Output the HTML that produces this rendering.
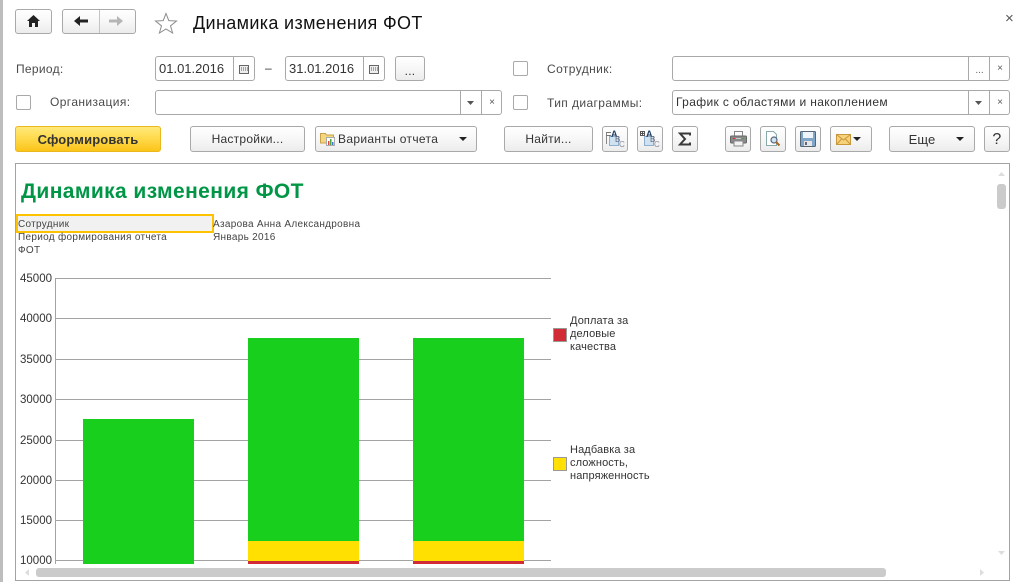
<!DOCTYPE html>
<html lang="ru"><head><meta charset="utf-8"><title>Динамика изменения ФОТ</title>
<style>
html,body{margin:0;padding:0;background:#fff}
#p{position:relative;width:1016px;height:582px;overflow:hidden;background:#fff;font-family:"Liberation Sans",Arial,sans-serif;font-size:12px;color:#333}
#p div,#p span.a,#p svg{position:absolute;box-sizing:border-box}
.b{border:1px solid #a9a9a9;border-radius:3px;background:linear-gradient(#fff,#f7f7f7 50%,#ececec);text-align:center;height:26px;top:126px;line-height:25px;color:#333;letter-spacing:.25px}
.f{border:1px solid #a9a9a9;border-radius:3px;background:#fff;height:25px;line-height:23px}
.s{top:0;bottom:0;width:1px;background:#a9a9a9}
.l{line-height:14px;white-space:nowrap;color:#4a4a4a;letter-spacing:.4px}
.c{width:15px;height:15px;border:1px solid #a9a9a9;border-radius:2px;background:#fff}
.g{left:55px;width:496px;height:1px;background:#a3a3a3}
.y{left:16px;width:36px;text-align:right;font-size:11.5px;line-height:14px;color:#333}
.t{font-size:10px;line-height:12px;white-space:nowrap;color:#444;letter-spacing:.3px}
.lg{left:570px;font-size:11px;line-height:13px;color:#333;white-space:nowrap;letter-spacing:.12px}
.x{font-size:10px;color:#555;text-align:center}
.ic{font-family:"Liberation Sans",Arial,sans-serif;font-weight:bold}
</style></head><body><div id="p">
<div style="left:0;top:0;width:3px;height:582px;background:#bdbdbd"></div>

<div class="b" style="left:15px;top:9px;width:37px;height:25px;border-radius:3px"></div>
<svg style="left:26px;top:14px" width="15" height="14" viewBox="0 0 15 14"><path d="M7.5 1 L1 7 L3 7 L3 13 L6 13 L6 9 L9 9 L9 13 L12 13 L12 7 L14 7 Z" fill="#222"/></svg>
<div class="b" style="left:62px;top:9px;width:74px;height:25px"></div>
<div style="left:99px;top:10px;width:1px;height:23px;background:#c4c4c4"></div>
<svg style="left:73px;top:15px" width="16" height="12" viewBox="0 0 16 12"><path d="M1 6 L7 1 L7 4.5 L15 4.5 L15 7.5 L7 7.5 L7 11 Z" fill="#222"/></svg>
<svg style="left:108px;top:15px" width="16" height="12" viewBox="0 0 16 12"><path d="M15 6 L9 1 L9 4.5 L1 4.5 L1 7.5 L9 7.5 L9 11 Z" fill="#b5b5b5"/></svg>
<svg style="left:154px;top:12px" width="24" height="22" viewBox="0 0 24 22"><path d="M12 1.5 L14.8 8.6 L22.5 9 L16.5 13.8 L18.6 21 L12 17 L5.4 21 L7.5 13.8 L1.5 9 L9.2 8.6 Z" fill="#fff" stroke="#8c8c8c" stroke-width="1"/></svg>
<div style="left:193px;top:12px;font-size:18px;line-height:22px;color:#111;white-space:nowrap;letter-spacing:.35px">Динамика изменения ФОТ</div>
<div style="left:1005px;top:12px;font-size:15px;line-height:14px;color:#555">×</div>

<div class="l" style="left:16px;top:62px;letter-spacing:.3px">Период:</div>
<div class="f" style="left:155px;top:56px;width:100px"><span class="a" style="left:3px;top:0;font-size:13px">01.01.2016</span><div class="s" style="left:77px"></div></div>
<svg style="left:239px;top:65px" width="10" height="9" viewBox="0 0 10 9"><rect x=".5" y=".5" width="9" height="8" fill="#eee" stroke="#666"/><path d="M2 3h1M4 3h1M6 3h1M8 3h1M2 5h1M4 5h1M6 5h1M8 5h1" stroke="#555"/></svg>
<div style="left:265px;top:61px;line-height:14px;color:#333">–</div>
<div class="f" style="left:285px;top:56px;width:100px"><span class="a" style="left:3px;top:0;font-size:13px">31.01.2016</span><div class="s" style="left:77px"></div></div>
<svg style="left:369px;top:65px" width="10" height="9" viewBox="0 0 10 9"><rect x=".5" y=".5" width="9" height="8" fill="#eee" stroke="#666"/><path d="M2 3h1M4 3h1M6 3h1M8 3h1M2 5h1M4 5h1M6 5h1M8 5h1" stroke="#555"/></svg>
<div class="b" style="left:395px;top:56px;width:30px;height:25px;line-height:28px">...</div>

<div class="c" style="left:16px;top:95px"></div>
<div class="l" style="left:50px;top:95px">Организация:</div>
<div class="f" style="left:155px;top:90px;width:347px"><div class="s" style="left:304px"></div><div class="s" style="left:325px"></div></div>
<svg style="left:467px;top:101px" width="7" height="4"><path d="M0 0H7L3.5 4Z" fill="#555"/></svg>
<div class="x" style="left:482px;top:96px;width:20px;line-height:14px">×</div>

<div class="c" style="left:513px;top:61px"></div>
<div class="l" style="left:547px;top:62px">Сотрудник:</div>
<div class="f" style="left:672px;top:56px;width:338px"><div class="s" style="left:295px"></div><div class="s" style="left:316px"></div></div>
<div style="left:969px;top:62px;width:21px;text-align:center;line-height:18px;font-size:10px;color:#666">...</div>
<div class="x" style="left:990px;top:62px;width:20px;line-height:14px">×</div>

<div class="c" style="left:513px;top:95px"></div>
<div class="l" style="left:547px;top:96px">Тип диаграммы:</div>
<div class="f" style="left:672px;top:90px;width:338px"><span class="a" style="left:3px;top:0;color:#333;white-space:nowrap;letter-spacing:.36px">График с областями и накоплением</span><div class="s" style="left:295px"></div><div class="s" style="left:316px"></div></div>
<svg style="left:975px;top:101px" width="7" height="4"><path d="M0 0H7L3.5 4Z" fill="#555"/></svg>
<div class="x" style="left:990px;top:96px;width:20px;line-height:14px">×</div>

<div class="b" style="left:15px;width:146px;border-color:#e8b81e;background:linear-gradient(#ffe97a,#ffd94a 50%,#fcc419);font-weight:bold;font-size:13px;color:#333;letter-spacing:.15px">Сформировать</div>
<div class="b" style="left:190px;width:115px">Настройки...</div>
<div class="b" style="left:315px;width:162px"></div>
<svg style="left:320px;top:131px" width="17" height="16" viewBox="0 0 17 16"><path d="M.5 2.5h5l1 1.5h7v8h-13z" fill="#f2d680" stroke="#c9a24a"/><rect x="6.5" y="6.5" width="8" height="8" fill="#fff" stroke="#aaa"/><rect x="8" y="10" width="1.5" height="4" fill="#d44"/><rect x="10" y="8" width="1.5" height="6" fill="#4a4"/><rect x="12" y="11" width="1.5" height="3" fill="#47c"/></svg>
<div style="left:338px;top:126px;line-height:26px;color:#333;white-space:nowrap;letter-spacing:.33px">Варианты отчета</div>
<svg style="left:459px;top:137px" width="8" height="4"><path d="M0 0H8L4 4Z" fill="#222"/></svg>
<div class="b" style="left:504px;width:89px">Найти...</div>

<div class="b" style="left:602px;width:26px"></div>
<svg style="left:604px;top:128px" width="22" height="22" viewBox="0 0 22 22"><path d="M5.5 8.5h9v9h-9z" fill="#cfe2f2" stroke="#8fb0cc"/><path d="M2.5 5v11" stroke="#888"/><path d="M2 4.500h5M2 7.500h5" stroke="#777"/><text class="ic" x="7" y="9" font-size="9" fill="#1d3f66">A</text><text x="11" y="14" font-size="8" fill="#667">B</text><text x="15" y="19" font-size="8" fill="#889">C</text></svg>
<div class="b" style="left:637px;width:26px"></div>
<svg style="left:639px;top:128px" width="22" height="22" viewBox="0 0 22 22"><path d="M5.500 8.500h9v9h-9z" fill="#cfe2f2" stroke="#8fb0cc"/><path d="M1.500 3.500h4v4h-4zM3.500 3.500v4M1.500 5.500h4" fill="none" stroke="#555"/><text class="ic" x="7" y="9" font-size="9" fill="#1d3f66">A</text><text x="11" y="14" font-size="8" fill="#667">B</text><text x="15" y="19" font-size="8" fill="#889">C</text></svg>
<div class="b" style="left:672px;width:26px"></div>
<svg style="left:678px;top:132px" width="14" height="14" viewBox="0 0 14 14"><path d="M12 3.500V1.500H2L7 7 2 12.500H12V10.500" fill="none" stroke="#3a3a3a" stroke-width="2"/></svg>

<div class="b" style="left:725px;width:26px"></div>
<svg style="left:730px;top:131px" width="17" height="16" viewBox="0 0 17 16"><rect x="4.500" y=".5" width="8" height="5" fill="#fff" stroke="#888"/><rect x=".5" y="5" width="16" height="7" rx="1" fill="#8a8a8a" stroke="#666"/><rect x="3" y="7" width="2" height="1" fill="#d33"/><rect x="6" y="7" width="5" height="1" fill="#ccc"/><rect x="12" y="7" width="2" height="1" fill="#4a4"/><rect x="4" y="10" width="9" height="5" fill="#f2f2f2" stroke="#888"/></svg>
<div class="b" style="left:760px;width:26px"></div>
<svg style="left:765px;top:130px" width="17" height="18" viewBox="0 0 17 18"><path d="M1.500 1.500h7l3 3v11h-10z" fill="#fff" stroke="#8aa"/><circle cx="9" cy="10" r="3" fill="#cfe3f5" stroke="#567" stroke-width="1.2"/><path d="M11 12l3.500 3.500" stroke="#a5682a" stroke-width="2"/></svg>
<div class="b" style="left:795px;width:26px"></div>
<svg style="left:800px;top:131px" width="16" height="16" viewBox="0 0 16 16"><rect x=".5" y=".5" width="15" height="15" rx="1" fill="#7fa6c8" stroke="#567"/><rect x="3" y="1" width="10" height="6" fill="#eef4f9"/><rect x="4" y="10" width="8" height="5" fill="#e6e6e6"/><rect x="5" y="11" width="2" height="3" fill="#667"/></svg>
<div class="b" style="left:830px;width:42px"></div>
<svg style="left:836px;top:134px" width="15" height="11" viewBox="0 0 15 11"><rect x=".5" y=".5" width="14" height="10" fill="#f6d27a" stroke="#c9973c"/><path d="M.5 .5 7.500 6 14.500 .5M.5 10.500 5.500 5M14.500 10.500 9.500 5" fill="none" stroke="#c9973c"/></svg>
<svg style="left:853px;top:137px" width="8" height="4"><path d="M0 0H8L4 4Z" fill="#222"/></svg>
<div class="b" style="left:889px;width:86px;padding-right:20px;font-size:13px;letter-spacing:.1px">Еще</div>
<svg style="left:956px;top:137px" width="8" height="4"><path d="M0 0H8L4 4Z" fill="#222"/></svg>
<div class="b" style="left:984px;width:26px;font-size:16px">?</div>

<div style="left:15px;top:163px;width:995px;height:418px;border:1px solid #a3a3a3;background:#fff"></div>
<div style="left:21px;top:179px;font-size:21px;line-height:25px;font-weight:bold;color:#009646;white-space:nowrap;letter-spacing:.41px">Динамика изменения ФОТ</div>
<div style="left:16px;top:214px;width:198px;height:19px;border:2px solid #fdc300;background:#f1f1f1"></div>
<div class="t" style="left:18px;top:219px">Сотрудник</div>
<div class="t" style="left:18px;top:232px">Период формирования отчета</div>
<div class="t" style="left:18px;top:245px">ФОТ</div>
<div class="t" style="left:213px;top:219px">Азарова Анна Александровна</div>
<div class="t" style="left:213px;top:232px">Январь 2016</div>

<div style="left:55px;top:278px;width:1px;height:286px;background:#a3a3a3"></div>
<div class="g" style="top:278px"></div><div class="y" style="top:272px">45000</div>
<div class="g" style="top:318px"></div><div class="y" style="top:312px">40000</div>
<div class="g" style="top:359px"></div><div class="y" style="top:353px">35000</div>
<div class="g" style="top:399px"></div><div class="y" style="top:393px">30000</div>
<div class="g" style="top:440px"></div><div class="y" style="top:434px">25000</div>
<div class="g" style="top:480px"></div><div class="y" style="top:474px">20000</div>
<div class="g" style="top:520px"></div><div class="y" style="top:514px">15000</div>
<div class="g" style="top:560px"></div><div class="y" style="top:554px">10000</div>

<div style="left:83px;top:419px;width:111px;height:145px;background:#19cf1e"></div>
<div style="left:248px;top:338px;width:111px;height:203px;background:#19cf1e"></div>
<div style="left:248px;top:541px;width:111px;height:20px;background:#ffe000"></div>
<div style="left:248px;top:561px;width:111px;height:3px;background:#d12b35"></div>
<div style="left:413px;top:338px;width:111px;height:203px;background:#19cf1e"></div>
<div style="left:413px;top:541px;width:111px;height:20px;background:#ffe000"></div>
<div style="left:413px;top:561px;width:111px;height:3px;background:#d12b35"></div>

<div style="left:553px;top:328px;width:14px;height:14px;background:#d12b35;border:1px solid #999"></div>
<div style="left:553px;top:457px;width:14px;height:14px;background:#ffe000;border:1px solid #999"></div>
<div class="lg" style="top:315px">Доплата за<br>деловые<br>качества</div>
<div class="lg" style="top:444px">Надбавка за<br>сложность,<br>напряженность</div>

<div style="left:36px;top:568px;width:850px;height:9px;background:#cbcbcb;border-radius:3px"></div>
<svg style="left:25px;top:569px" width="4" height="7"><path d="M4 0V7L0 3.500Z" fill="#ddd"/></svg>
<svg style="left:980px;top:569px" width="4" height="7"><path d="M0 0V7L4 3.500Z" fill="#ddd"/></svg>
<div style="left:997px;top:184px;width:9px;height:25px;background:#cbcbcb;border-radius:3px"></div>
<svg style="left:998px;top:172px" width="7" height="4"><path d="M0 4H7L3.500 0Z" fill="#ddd"/></svg>
<svg style="left:998px;top:551px" width="7" height="4"><path d="M0 0H7L3.500 4Z" fill="#ddd"/></svg>
</div></body></html>
